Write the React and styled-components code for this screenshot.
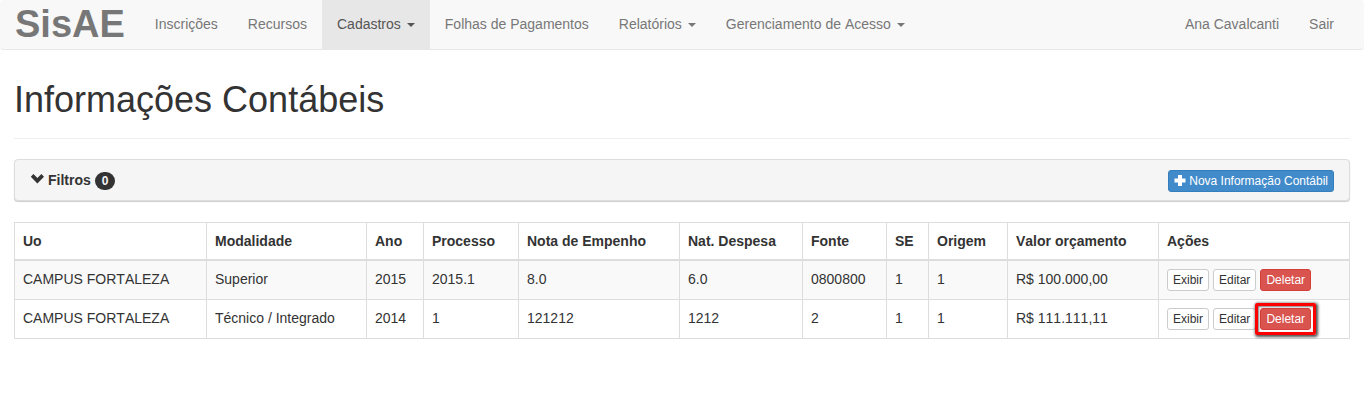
import styled, { createGlobalStyle, css } from "styled-components";

const links = [
  { label: "Inscrições" },
  { label: "Recursos" },
  { label: "Cadastros", dropdown: true, active: true },
  { label: "Folhas de Pagamentos" },
  { label: "Relatórios", dropdown: true },
  { label: "Gerenciamento de Acesso", dropdown: true },
];

const userLinks = [{ label: "Ana Cavalcanti" }, { label: "Sair" }];

const columns = [
  { name: "Uo", width: 192 },
  { name: "Modalidade", width: 160 },
  { name: "Ano", width: 57 },
  { name: "Processo", width: 95 },
  { name: "Nota de Empenho", width: 161 },
  { name: "Nat. Despesa", width: 123 },
  { name: "Fonte", width: 84 },
  { name: "SE", width: 42 },
  { name: "Origem", width: 79 },
  { name: "Valor orçamento", width: 151 },
  { name: "Ações", width: 191 },
];

const rows = [
  {
    id: 1,
    cells: [
      "CAMPUS FORTALEZA",
      "Superior",
      "2015",
      "2015.1",
      "8.0",
      "6.0",
      "0800800",
      "1",
      "1",
      "R$ 100.000,00",
    ],
  },
  {
    id: 2,
    cells: [
      "CAMPUS FORTALEZA",
      "Técnico / Integrado",
      "2014",
      "1",
      "121212",
      "1212",
      "2",
      "1",
      "1",
      "R$ 111.111,11",
    ],
    highlighted: true,
  },
];

const ChevronIcon = () => (
  <Icon width="14" height="14" viewBox="0 0 14 14" aria-hidden="true">
    <path d="M3.4 3l4 3.900 4-3.900L14 5.700l-6.600 6.700L.8 5.700z" />
  </Icon>
);

const PlusIcon = () => (
  <Icon width="12" height="12" viewBox="0 0 12 12" aria-hidden="true">
    <path d="M4 0h4v3.500h3.500v4H8V11H4V7.500H.5v-4H4z" />
  </Icon>
);

const NavLinks = ({ items }) => (
  <NavList>
    {items.map((item) => (
      <li key={item.label}>
        <NavLink href="#" $active={item.active}>
          {item.label}
          {item.dropdown && <Caret />}
        </NavLink>
      </li>
    ))}
  </NavList>
);

export const App = () => {
  return (
    <>
      <GlobalStyle />
      <Navbar>
        <Brand href="#">SisAE</Brand>
        <NavLinks items={links} />
        <Spacer />
        <NavLinks items={userLinks} />
      </Navbar>
      <Main>
        <Title>Informações Contábeis</Title>
        <Panel>
          <Filters type="button">
            <ChevronIcon />
            Filtros
            <Badge>0</Badge>
          </Filters>
          <Button type="button" $kind="primary">
            <PlusIcon />
            Nova Informação Contábil
          </Button>
        </Panel>
        <Table>
          <colgroup>
            {columns.map((column) => (
              <Col key={column.name} $width={column.width} />
            ))}
          </colgroup>
          <thead>
            <tr>
              {columns.map((column) => (
                <th key={column.name} scope="col">
                  {column.name}
                </th>
              ))}
            </tr>
          </thead>
          <tbody>
            {rows.map((row) => (
              <tr key={row.id}>
                {row.cells.map((cell, i) => (
                  <td key={columns[i].name}>{cell}</td>
                ))}
                <td>
                  <Actions>
                    <Button type="button">Exibir</Button>
                    <Button type="button">Editar</Button>
                    <Button
                      type="button"
                      $kind="danger"
                      $highlighted={row.highlighted}
                    >
                      Deletar
                    </Button>
                  </Actions>
                </td>
              </tr>
            ))}
          </tbody>
        </Table>
      </Main>
    </>
  );
};

const GlobalStyle = createGlobalStyle`
  * {
    box-sizing: border-box;
  }
  body {
    margin: 0;
    background: #fff;
    color: #333;
    font-family: "Liberation Sans", Arial, sans-serif;
    font-size: 14px;
    font-kerning: none;
    line-height: 20px;
  }
`;

const Navbar = styled.nav`
  display: flex;
  padding-right: 15px;
  background: #f8f8f8;
  border-bottom: 1px solid #e7e7e7;
  border-radius: 4px;
`;

const Brand = styled.a`
  padding: 14px 15px 15px;
  color: #777;
  font-size: 38px;
  font-weight: bold;
  text-decoration: none;
`;

const NavList = styled.ul`
  display: flex;
  margin: 0;
  padding: 0;
  list-style: none;
`;

const NavLink = styled.a`
  display: flex;
  align-items: center;
  gap: 6px;
  padding: 14px 15px 15px;
  white-space: nowrap;
  text-decoration: none;
  color: ${(props) => (props.$active ? "#555" : "#777")};
  background: ${(props) => (props.$active ? "#e7e7e7" : "transparent")};
  &:hover {
    color: #333;
  }
`;

const Caret = styled.span`
  margin-top: 2px;
  border-top: 4px solid;
  border-left: 4px solid transparent;
  border-right: 4px solid transparent;
`;

const Spacer = styled.div`
  flex: 1;
`;

const Main = styled.main`
  padding: 30px 14px;
`;

const Title = styled.h1`
  margin: 0 0 20px;
  padding-bottom: 18px;
  border-bottom: 1px solid #eee;
  font-size: 36px;
  font-weight: normal;
  line-height: 40px;
`;

const Panel = styled.div`
  display: flex;
  align-items: flex-start;
  justify-content: space-between;
  margin-bottom: 21px;
  padding: 10px 15px 8px;
  background: #f5f5f5;
  border: 1px solid #ddd;
  border-radius: 4px;
  box-shadow: 0 1px 1px rgba(0, 0, 0, 0.2);
`;

const Icon = styled.svg`
  fill: currentColor;
`;

const Filters = styled.button`
  display: flex;
  align-items: baseline;
  gap: 4px;
  padding: 0;
  border: 0;
  background: none;
  color: #333;
  font: inherit;
  font-weight: bold;
  cursor: pointer;
`;

const Badge = styled.span`
  padding: 3px 7px;
  border-radius: 10px;
  background: #333;
  color: #f5f5f5;
  font-size: 12px;
  line-height: 12px;
`;

const kinds = {
  default: { color: "#333", background: "#fff", border: "#ccc" },
  primary: { color: "#fff", background: "#428bca", border: "#357ebd" },
  danger: { color: "#fff", background: "#d9534f", border: "#d43f3a" },
};

const highlight = css`
  position: relative;
  &::after {
    content: "";
    position: absolute;
    inset: -6px;
    border: 3px solid #f00;
    border-radius: 2px;
    box-shadow: 1px 1px 3px 1px rgba(0, 0, 0, 0.7),
      inset 1px 1px 2px rgba(0, 0, 0, 0.5);
    pointer-events: none;
  }
`;

const Button = styled.button`
  display: flex;
  align-items: center;
  gap: 3px;
  padding: 1px 5px;
  border: 1px solid ${({ $kind = "default" }) => kinds[$kind].border};
  border-radius: 3px;
  background: ${({ $kind = "default" }) => kinds[$kind].background};
  color: ${({ $kind = "default" }) => kinds[$kind].color};
  font-family: inherit;
  font-size: 12px;
  line-height: 18px;
  white-space: nowrap;
  cursor: pointer;
  ${({ $highlighted }) => $highlighted && highlight}
`;

const Actions = styled.div`
  display: flex;
  gap: 4px;
`;

const Table = styled.table`
  width: 100%;
  border-collapse: collapse;
  border: 1px solid #ddd;
  th,
  td {
    padding: 8px;
    border: 1px solid #ddd;
    text-align: left;
    vertical-align: top;
  }
  th {
    border-bottom-width: 2px;
  }
  tbody tr:nth-child(odd) {
    background: #f9f9f9;
  }
`;

const Col = styled.col`
  width: ${(props) => props.$width}px;
`;

export default App;
